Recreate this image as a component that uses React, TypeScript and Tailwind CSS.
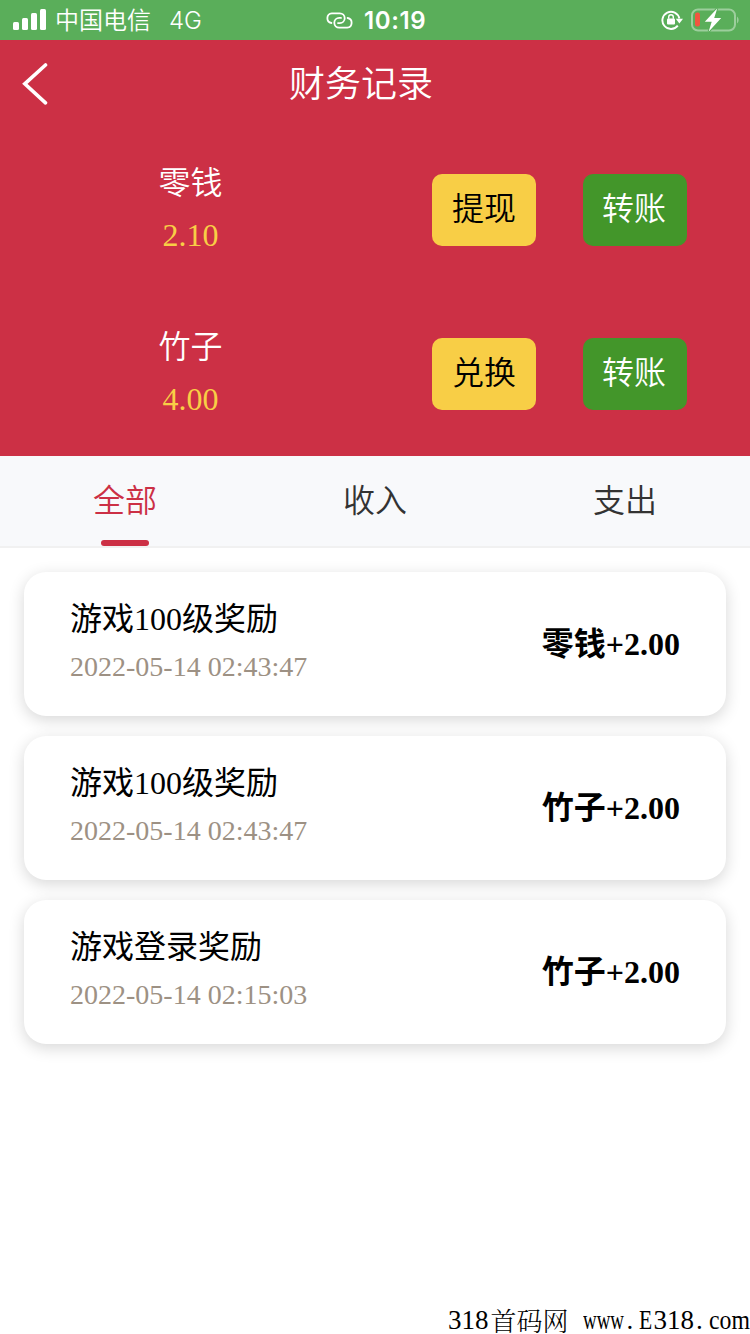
type Wallet = {
  name: string;
  amount: string;
  action: string;
};

type Item = {
  title: string;
  time: string;
  change: string;
};

const wallets: Wallet[] = [
  { name: '零钱', amount: '2.10', action: '提现' },
  { name: '竹子', amount: '4.00', action: '兑换' },
];

const tabs = ['全部', '收入', '支出'];

const records: Item[] = [
  { title: '游戏100级奖励', time: '2022-05-14 02:43:47', change: '零钱+2.00' },
  { title: '游戏100级奖励', time: '2022-05-14 02:43:47', change: '竹子+2.00' },
  { title: '游戏登录奖励', time: '2022-05-14 02:15:03', change: '竹子+2.00' },
];

function StatusBar() {
  return (
    <div className="flex h-10 items-center bg-[#5aae5a] font-['Inter','Noto_Sans_CJK_SC',sans-serif] text-white">
      <div className="flex w-[326px] items-center pl-[13px]">
        <svg width="34" height="22" viewBox="0 0 34 22" fill="currentColor">
          <rect x="0" y="13" width="6" height="8" rx="1.5" />
          <rect x="9" y="9" width="6" height="12" rx="1.5" />
          <rect x="18" y="4" width="6" height="17" rx="1.5" />
          <rect x="27" y="0" width="6" height="21" rx="1.5" />
        </svg>
        <span className="ml-2 pt-0.5 text-[24px] leading-[38px] font-[350]">中国电信</span>
        <span className="ml-[18px] pt-0.5 text-[24px] leading-[38px] font-[350]">4G</span>
      </div>
      <svg width="27" height="17" viewBox="0 0 27 17" fill="none" stroke="currentColor" strokeWidth="1.8" strokeLinecap="round">
        <path d="M5.4 11A4.9 4.9 0 0 1 5.8 1.3H13.8A4.9 4.9 0 0 1 13.8 11.1H12" />
        <path d="M21.6 6A4.9 4.9 0 0 1 21.2 15.7H13.2A4.9 4.9 0 0 1 13.2 5.9H15" />
      </svg>
      <span className="ml-[11px] pt-0.5 text-[24px] leading-[38px] font-semibold tracking-[0.6px]">10:19</span>
      <div className="ml-auto flex items-center pr-[11px]">
        <svg width="22" height="22" viewBox="0 0 22 22" fill="none" stroke="currentColor" strokeWidth="1.9">
          <path d="M16.8 16.6A8.6 8.6 0 1 1 18.4 9.5" />
          <path d="M14.8 9.8h7.2l-3.6 4.8z" fill="currentColor" stroke="none" />
          <rect x="6" y="9.5" width="8" height="6" rx="1" fill="currentColor" stroke="none" />
          <path d="M7.7 9.8V8a2.3 2.3 0 0 1 4.6 0v1.8" strokeWidth="1.4" />
        </svg>
        <svg className="ml-2" width="48" height="26" viewBox="0 0 48 26" fill="none">
          <rect x="1" y="2.5" width="43" height="21" rx="6" stroke="#fff" strokeOpacity=".4" strokeWidth="2" />
          <path d="M46 9.5a4.5 4.5 0 0 1 0 7z" fill="#fff" fillOpacity=".4" />
          <rect x="4" y="5.5" width="5" height="14" rx="2.2" fill="#f1553f" />
          <path d="M26.3 1.3L13.8 14.8h6.9L17.6 24.7 30.2 11h-7z" fill="#fff" stroke="#5aae5a" strokeWidth="2" paintOrder="stroke" />
        </svg>
      </div>
    </div>
  );
}

function WalletRow({ name, amount, action }: Wallet) {
  return (
    <div className="flex h-[164px] items-center">
      <div className="w-[381px] pb-0.5 text-center font-[350]">
        <div className="text-[32px] leading-[52px] text-white">{name}</div>
        <div className="text-[32px] leading-[52px] text-[#f8ce46]">{amount}</div>
      </div>
      <button className="ml-[51px] h-[72px] w-[104px] rounded-[10px] bg-[#f8ce46] pb-0.5 text-[32px] leading-none font-[350] text-black">
        {action}
      </button>
      <button className="ml-[47px] h-[72px] w-[104px] rounded-[10px] bg-[#43962a] pr-0.5 pb-0.5 text-[32px] leading-none font-[350] text-white">
        转账
      </button>
    </div>
  );
}

function RecordCard({ title, time, change }: Item) {
  return (
    <div className="flex h-36 items-center justify-between rounded-[22px] bg-white pr-[46px] pl-[46px] shadow-[0_4px_16px_rgba(0,0,0,0.16)]">
      <div className="pb-0.5">
        <div className="text-[32px] leading-[48px]">{title}</div>
        <div className="text-[28px] leading-[48px] text-[#9d9184]">{time}</div>
      </div>
      <div className="text-[32px] font-bold">{change}</div>
    </div>
  );
}

export default function App() {
  return (
    <div className="flex h-[1334px] w-[750px] flex-col overflow-hidden bg-white font-['Liberation_Serif','Noto_Sans_CJK_SC',serif] text-black">
      <StatusBar />

      <header className="h-[416px] bg-[#cc3045]">
        <div className="flex h-[88px] items-center text-white">
          <svg className="ml-[22px]" width="26" height="42" viewBox="0 0 26 42" fill="none" stroke="currentColor" strokeWidth="3.6">
            <path d="M23.5 2L2.8 20.8 23.5 39.8" strokeLinecap="round" />
          </svg>
          <h1 className="ml-[241px] pt-0.5 text-[36px] leading-[86px] font-[350]">财务记录</h1>
        </div>
        {wallets.map((w) => (
          <WalletRow key={w.name} {...w} />
        ))}
      </header>

      <nav className="flex h-[92px] border-b-2 border-[#f1f1f1] bg-[#f8f9fb]">
        {tabs.map((tab, i) => (
          <div
            key={tab}
            className={`flex flex-1 flex-col items-center text-[32px] leading-[84px] font-[350] ${i === 0 ? 'text-[#cc3045]' : 'text-[#333]'}`}
          >
            <span className="h-[84px] pt-[3px]">{tab}</span>
            {i === 0 && <span className="h-1.5 w-12 shrink-0 rounded-full bg-[#cc3045]" />}
          </div>
        ))}
      </nav>

      <main className="flex flex-col gap-5 px-6 pt-6">
        {records.map((r, i) => (
          <RecordCard key={i} {...r} />
        ))}
      </main>

      <footer className="mt-auto flex h-[27px] justify-end text-[27px] leading-[26px] whitespace-pre">
        <span>318</span>
        <span className="mr-[14px] ml-[2px] text-[26px] font-['Noto_Serif_CJK_SC','Noto_Sans_CJK_SC',serif] font-light">首码网</span>
        <span className="w-[42px]">
          <span className="inline-block origin-left scale-x-[0.7]">www</span>
        </span>
        <span className="w-[14px] pl-[2px]">.</span>
        <span className="w-[15px]">
          <span className="inline-block origin-left scale-x-[0.8]">E</span>
        </span>
        <span>318</span>
        <span className="w-[15px] pl-[2px]">.</span>
        <span className="w-[41px]">
          <span className="inline-block origin-left scale-x-[0.88]">com</span>
        </span>
      </footer>
    </div>
  );
}
